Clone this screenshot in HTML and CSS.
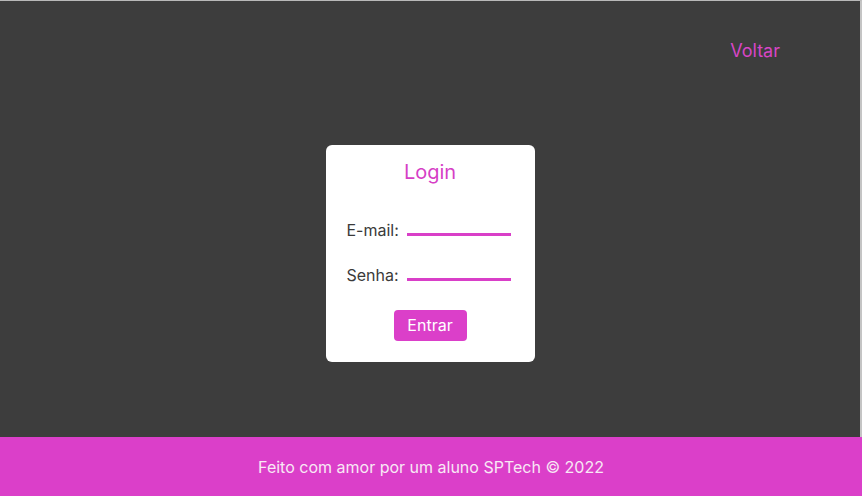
FILE: index.html
```html
<!DOCTYPE html>
<html lang="pt-BR">
<head>
<meta charset="utf-8">
<title>Login</title>
<link rel="stylesheet" href="styles.css">
</head>
<body>
<div class="page">
  <header class="topbar">
    <a class="back" href="#">Voltar</a>
  </header>
  <main class="main">
    <form class="card">
      <h1 class="title">Login</h1>
      <div class="row">
        <label class="label" for="email">E-mail:</label>
        <input class="field" id="email" type="text">
      </div>
      <div class="row">
        <label class="label" for="senha">Senha:</label>
        <input class="field" id="senha" type="password">
      </div>
      <div class="actions">
        <button class="btn" type="button">Entrar</button>
      </div>
    </form>
  </main>
  <footer class="footer">Feito com amor por um aluno SPTech © 2022</footer>
</div>
</body>
</html>
```
FILE: styles.css
```css
* { box-sizing: border-box; }
html, body { margin: 0; padding: 0; }
body {
  font-family: Inter, "Noto Sans", sans-serif;
  background: #3d3d3d;
}
.page {
  width: 862px;
  height: 496px;
  display: flex;
  flex-direction: column;
  border-top: 1px solid #b9b9b9;
  border-right: 2px solid #c4c4c4;
  background: #3d3d3d;
}
.topbar {
  height: 70px;
  display: flex;
  justify-content: flex-end;
  align-items: flex-start;
  padding: 39px 80px 0 0;
}
.back {
  color: #d746c6;
  font-size: 18px;
  line-height: 22px;
  text-decoration: none;
}
.main {
  flex: 1;
  display: flex;
  justify-content: center;
  align-items: center;
  padding-bottom: 2px;
}
.card {
  width: 209px;
  height: 217px;
  background: #ffffff;
  border-radius: 6px;
  padding: 15px 24px 21px 21px;
  display: flex;
  flex-direction: column;
  margin: 0;
}
.title {
  margin: 0 0 36px 3px;
  text-align: center;
  font-weight: 400;
  font-size: 20px;
  line-height: 24px;
  color: #d63fc6;
}
.row {
  display: flex;
  align-items: center;
  height: 20px;
  gap: 7px;
  margin-bottom: 25px;
}
.label {
  font-size: 16px;
  line-height: 20px;
  color: #3a3a3a;
  width: 53px;
  margin-top: 1px;
}
.field {
  width: 104px;
  height: 12px;
  margin-top: 1px;
  border: none;
  border-bottom: 3px solid #d93fc8;
  padding: 0;
  outline: none;
  background: transparent;
}
.actions {
  display: flex;
  justify-content: center;
  padding-left: 3px;
  margin-top: 0;
}
.btn {
  width: 73px;
  height: 31px;
  border: none;
  border-radius: 4px;
  background: #db3fc9;
  color: #ffffff;
  font-family: Inter, "Noto Sans", sans-serif;
  font-size: 16px;
  padding: 0;
}
.footer {
  height: 59px;
  background: #db3fc9;
  color: #f8e8f5;
  font-size: 16px;
  display: flex;
  align-items: center;
  justify-content: center;
  margin-right: -2px;
}
```
